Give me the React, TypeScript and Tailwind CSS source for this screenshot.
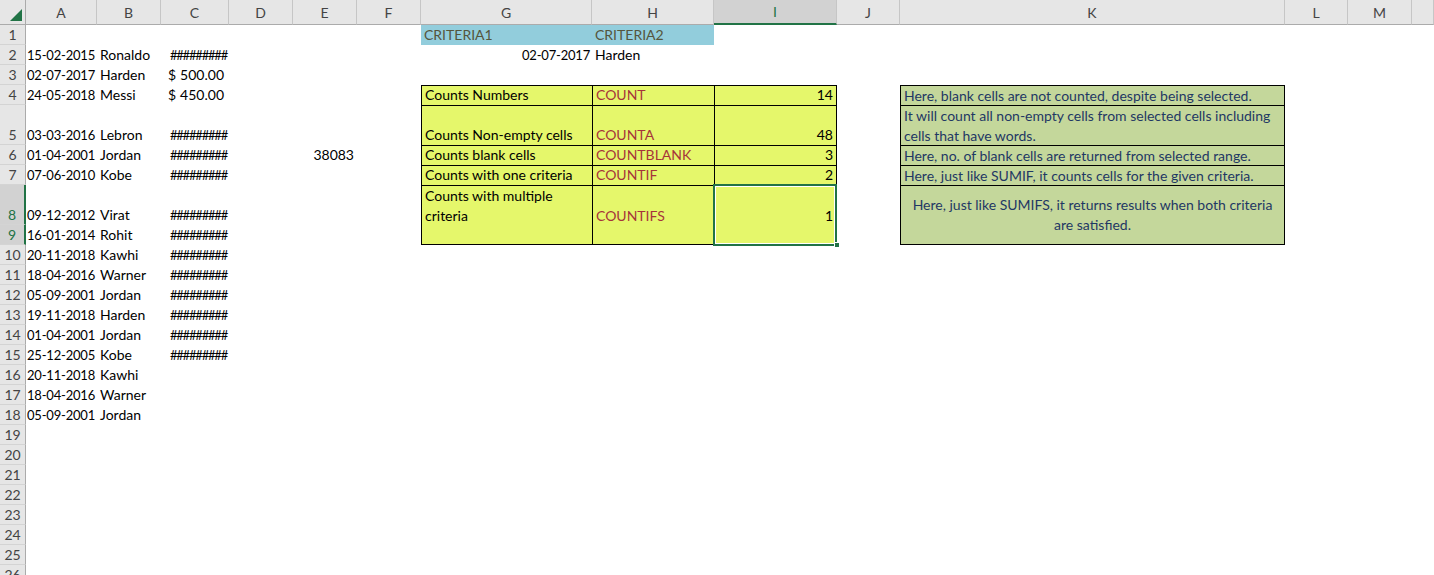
import React from 'react';

const COL_START = ['col-start-1', 'col-start-2', 'col-start-3', 'col-start-4', 'col-start-5', 'col-start-6', 'col-start-7', 'col-start-8', 'col-start-9', 'col-start-10', 'col-start-11', 'col-start-12', 'col-start-13', 'col-start-14', 'col-start-15'];
const ROW_START = ['row-start-1', 'row-start-2', 'row-start-3', 'row-start-4', 'row-start-5', 'row-start-6', 'row-start-7', 'row-start-8', 'row-start-9', 'row-start-10', 'row-start-11', 'row-start-12', 'row-start-13', 'row-start-14', 'row-start-15', 'row-start-16', 'row-start-17', 'row-start-18', 'row-start-19', 'row-start-20', 'row-start-21', 'row-start-22', 'row-start-23', 'row-start-24', 'row-start-25', 'row-start-26', 'row-start-27'];

const LETTERS = ['A', 'B', 'C', 'D', 'E', 'F', 'G', 'H', 'I', 'J', 'K', 'L', 'M', ''];

const players = [
  ['15-02-2015', 'Ronaldo', '#########'],
  ['02-07-2017', 'Harden', '$500.00'],
  ['24-05-2018', 'Messi', '$450.00'],
  ['03-03-2016', 'Lebron', '#########'],
  ['01-04-2001', 'Jordan', '#########'],
  ['07-06-2010', 'Kobe', '#########'],
  ['09-12-2012', 'Virat', '#########'],
  ['16-01-2014', 'Rohit', '#########'],
  ['20-11-2018', 'Kawhi', '#########'],
  ['18-04-2016', 'Warner', '#########'],
  ['05-09-2001', 'Jordan', '#########'],
  ['19-11-2018', 'Harden', '#########'],
  ['01-04-2001', 'Jordan', '#########'],
  ['25-12-2005', 'Kobe', '#########'],
  ['20-11-2018', 'Kawhi', ''],
  ['18-04-2016', 'Warner', ''],
  ['05-09-2001', 'Jordan', ''],
];

const counts = [
  { row: 4, label: 'Counts Numbers', fn: 'COUNT', value: '14', note: ['Here, blank cells are not counted, despite being selected.'] },
  { row: 5, label: 'Counts Non-empty cells', fn: 'COUNTA', value: '48', note: ['It will count all non-empty cells from selected cells including', 'cells that have words.'] },
  { row: 6, label: 'Counts blank cells', fn: 'COUNTBLANK', value: '3', note: ['Here, no. of blank cells are returned from selected range.'] },
  { row: 7, label: 'Counts with one criteria', fn: 'COUNTIF', value: '2', note: ['Here, just like SUMIF, it counts cells for the given criteria.'] },
];

type CellProps = {
  c: number;
  r: number;
  className?: string;
  children?: React.ReactNode;
};

// c: 1 = column A, r: 1 = sheet row 1
const Cell: React.FC<CellProps> = ({ c, r, className = '', children }) => (
  <div className={`${COL_START[c]} ${ROW_START[r]} min-w-0 flex px-[3px] leading-[20px] whitespace-nowrap ${className}`}>
    {children}
  </div>
);

export default function App() {
  return (
    <div className="w-[1434px] h-[575px] overflow-hidden bg-white font-[Lato,sans-serif] text-[14px] text-black">
      <div className="grid grid-cols-[26px_71px_64px_68px_64px_64px_64px_171px_122px_123px_63px_385px_63px_64px_1fr] grid-rows-[25px_20px_20px_20px_20px_40px_20px_20px_40px_20px_repeat(17,20px)]">
        {/* corner */}
        <div className="col-start-1 row-start-1 bg-[#e6e6e6] border-r border-b border-[#ababab] flex items-end justify-end pr-[3px] pb-[3px]">
          <svg width="12" height="12" viewBox="0 0 12 12">
            <polygon points="12,0 12,12 0,12" fill="#217346" />
          </svg>
        </div>

        {/* column headers */}
        {LETTERS.map((l, i) => (
          <div
            key={l + i}
            className={`${COL_START[i + 1]} row-start-1 flex items-center justify-center text-[14px] ${
              l === 'I'
                ? 'bg-[#d2d2d2] text-[#217346] border-b-2 border-b-[#217346] border-r border-r-[#c6c6c6]'
                : 'bg-[#e6e6e6] text-[#444] border-b border-b-[#ababab] border-r border-r-[#c6c6c6]'
            }`}
          >
            {l}
          </div>
        ))}

        {/* row headers */}
        {Array.from({ length: 26 }, (_, i) => i + 1).map((n) => (
          <div
            key={n}
            className={`col-start-1 ${ROW_START[n]} flex items-end justify-center text-[14px] leading-[19px] border-b border-b-[#d4d4d4] ${
              n === 8 || n === 9
                ? 'bg-[#d2d2d2] text-[#217346] border-r-2 border-r-[#217346]'
                : 'bg-[#e6e6e6] text-[#444] border-r border-r-[#ababab]'
            }`}
          >
            {n}
          </div>
        ))}

        {/* player list */}
        {players.map(([date, name, amount], i) => (
          <React.Fragment key={i}>
            <Cell c={1} r={i + 2} className="items-end justify-end pr-[2px] text-[13px] tracking-[-0.2px]">{date}</Cell>
            <Cell c={2} r={i + 2} className="items-end">{name}</Cell>
            {amount.startsWith('#') && (
              <Cell c={3} r={i + 2} className="items-end justify-end pr-[2px] text-[13px] tracking-[-1.2px]">{amount}</Cell>
            )}
            {amount.startsWith('$') && (
              <Cell c={3} r={i + 2} className="items-end justify-between pl-[7px] pr-[5px]">
                <span>$</span>
                <span>{amount.slice(1)}</span>
              </Cell>
            )}
          </React.Fragment>
        ))}
        <Cell c={5} r={6} className="items-end justify-end">38083</Cell>

        {/* criteria */}
        <Cell c={7} r={1} className="items-end bg-[#92cddc] text-[#55553c]">CRITERIA1</Cell>
        <Cell c={8} r={1} className="items-end bg-[#92cddc] text-[#55553c]">CRITERIA2</Cell>
        <Cell c={7} r={2} className="items-end justify-end pr-[2px] text-[13px] tracking-[-0.2px]">02-07-2017</Cell>
        <Cell c={8} r={2} className="items-end">Harden</Cell>

        {/* counts table */}
        {counts.map((row) => (
          <React.Fragment key={row.row}>
            <Cell c={7} r={row.row} className="items-end bg-[#e5f76b] border-l border-t border-black">{row.label}</Cell>
            <Cell c={8} r={row.row} className="items-end bg-[#e5f76b] border-l border-t border-black text-[#a6343a]">{row.fn}</Cell>
            <Cell c={9} r={row.row} className="items-end bg-[#e5f76b] border-l border-r border-t border-black justify-end">{row.value}</Cell>
            <Cell c={11} r={row.row} className="flex-col justify-start bg-[#c4d79b] border-l border-r border-t border-black text-[#1f3864]">
              {row.note.map((line) => (
                <span key={line}>{line}</span>
              ))}
            </Cell>
          </React.Fragment>
        ))}

        <div className="col-start-8 row-start-9 row-span-2 bg-[#e5f76b] border-l border-t border-b border-black px-[3px] leading-[20px] whitespace-nowrap">
          Counts with multiple
          <br />
          criteria
        </div>
        <div className="col-start-9 row-start-9 row-span-2 bg-[#e5f76b] border-l border-t border-b border-black px-[3px] flex items-center text-[#a6343a]">
          COUNTIFS
        </div>
        <div className="col-start-10 row-start-9 row-span-2 relative bg-[#e5f76b] border-l border-r border-t border-b border-black px-[3px] flex items-center justify-end">
          1
          <div className="absolute -left-[2px] -top-[2px] -right-[1px] -bottom-[2px] border-2 border-[#217346]">
            <div className="h-full w-full border border-white" />
          </div>
          <div className="absolute -right-[4px] -bottom-[4px] w-[6px] h-[6px] bg-[#217346] border border-white" />
        </div>
        <div className="col-start-12 row-start-9 row-span-2 bg-[#c4d79b] border-l border-r border-t border-b border-black text-[#1f3864] px-[3px] leading-[20px] flex flex-col items-center justify-center text-center whitespace-nowrap">
          <span>Here, just like SUMIFS, it returns results when both criteria</span>
          <span>are satisfied.</span>
        </div>
      </div>
    </div>
  );
}
